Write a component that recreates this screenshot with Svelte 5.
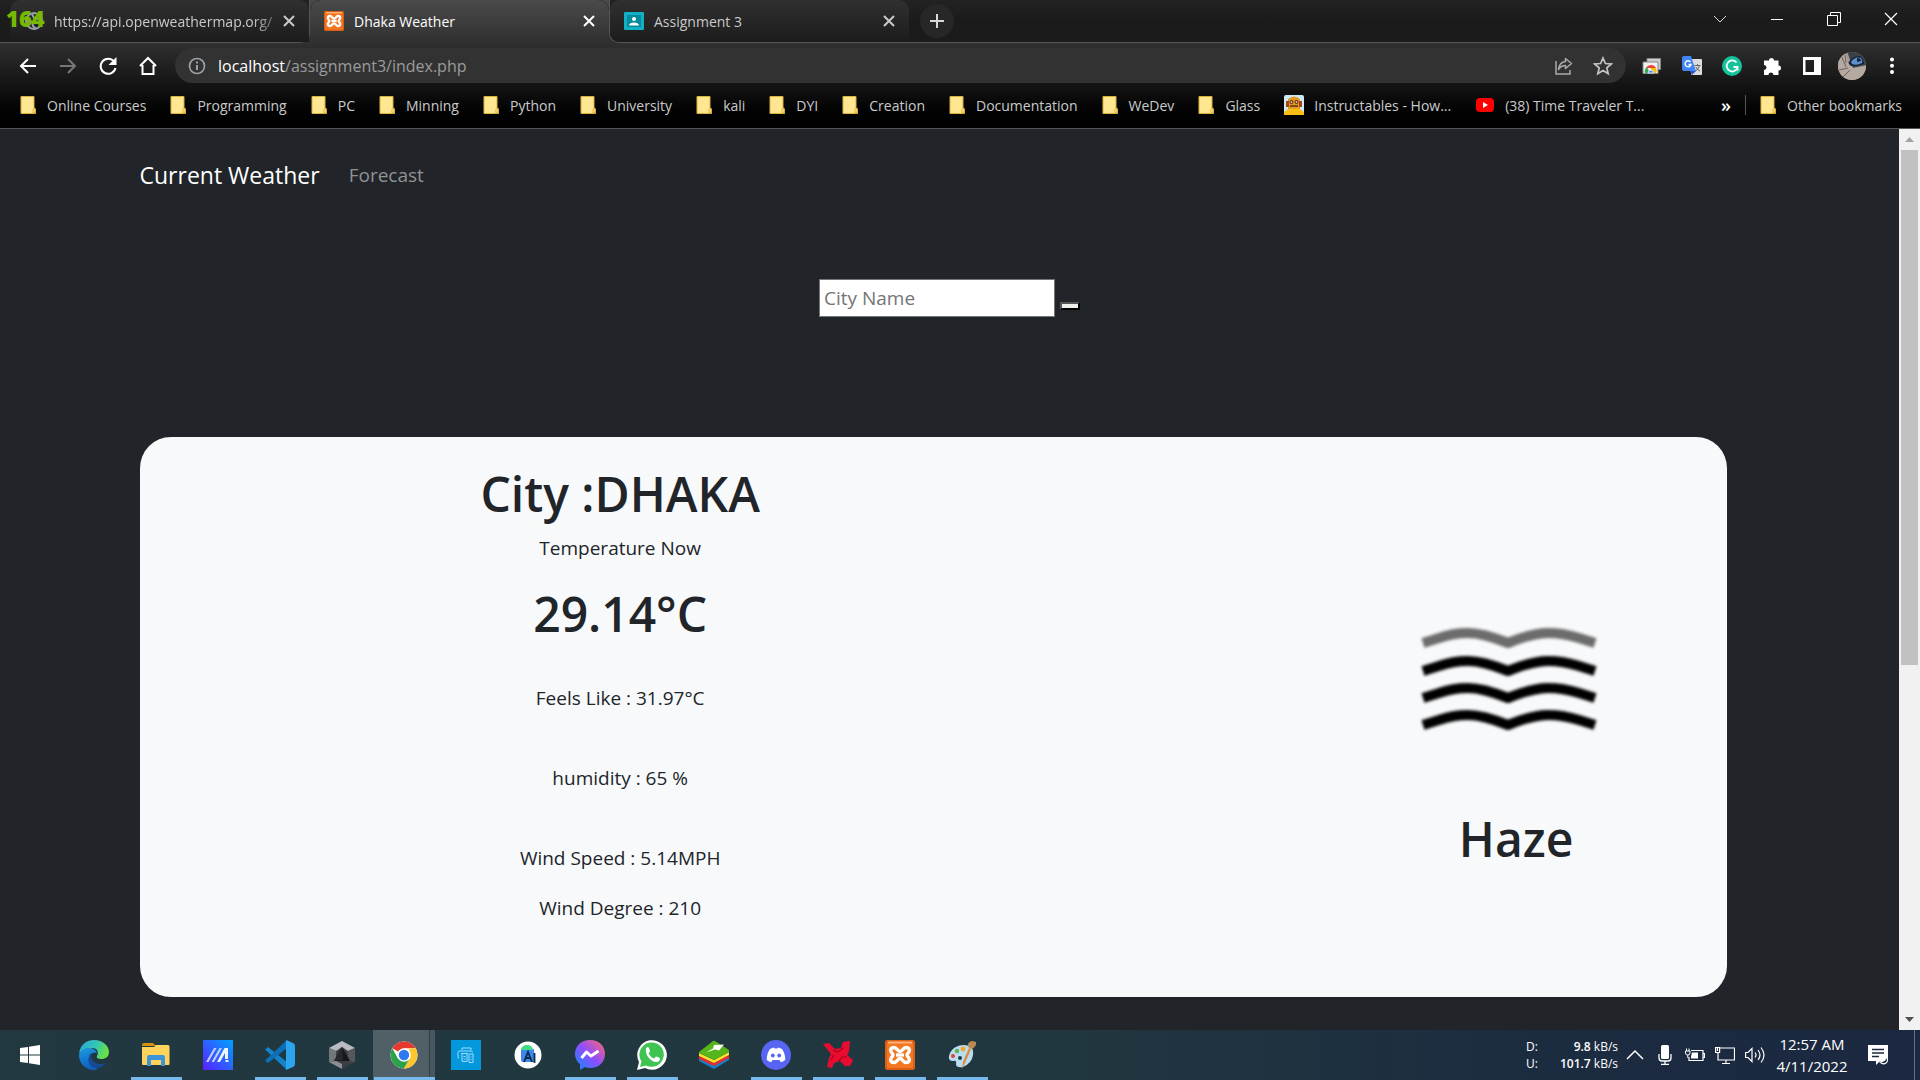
<script>
  const folders = ['Online Courses', 'Programming', 'PC', 'Minning', 'Python', 'University', 'kali', 'DYI', 'Creation', 'Documentation', 'WeDev', 'Glass'];
  const apps = [
    { id: 'edge', name: 'Microsoft Edge' },
    { id: 'explorer', name: 'File Explorer', open: true },
    { id: 'armoury', name: 'MyASUS' },
    { id: 'vscode', name: 'Visual Studio Code', open: true },
    { id: 'cube', name: 'Cube', open: true },
    { id: 'chrome', name: 'Google Chrome', open: true, active: true },
    { id: 'printer', name: 'Printer' },
    { id: 'studio', name: 'Android Studio' },
    { id: 'messenger', name: 'Messenger', open: true },
    { id: 'whatsapp', name: 'WhatsApp', open: true },
    { id: 'bluestacks', name: 'BlueStacks' },
    { id: 'discord', name: 'Discord', open: true },
    { id: 'red', name: 'Game', open: true },
    { id: 'xampp', name: 'XAMPP', open: true },
    { id: 'paint', name: 'Paint', open: true }
  ];
  const waves = [43, 71, 98, 125];
  let city = $state('');
</script>

{#snippet folder()}
  <svg class="folder" viewBox="0 0 16 18" aria-hidden="true">
    <path d="M1 .5h13V12l1.500 1v4.500H1z" fill="#ffe690" stroke="#d9b23c" />
    <path d="M13 17v-4l2-1v5z" fill="#fff0b0" stroke="#d9a520" stroke-width=".8" />
  </svg>
{/snippet}

{#snippet xampp()}
  <rect x="0" y="0" width="30" height="30" rx="3" fill="#f37623" />
  <rect x="1" y="1" width="28" height="28" rx="2" fill="none" stroke="#d35a10" stroke-width="1.500" />
  <path d="M3 2.500h24" stroke="#ffb27a" stroke-width="2" />
  <path d="M9 7.500c-3 0-4 2-3 4 .5 1.500 2 2 2 3.500s-1.500 2-2 3.500c-1 2 0 4 3 4s3.500-4 6-4 3 4 6 4 4-2 3-4c-.5-1.500-2-2-2-3.500s1.500-2 2-3.500c1-2 0-4-3-4s-3.500 4-6 4-3-4-6-4z" fill="none" stroke="#fff" stroke-width="3.400" />
  <path d="M11 15h8" stroke="#fff" stroke-width="3.400" />
{/snippet}

{#snippet cross()}
  <svg width="12" height="12" viewBox="0 0 12 12" aria-hidden="true"><path d="M1 1l10 10M11 1L1 11" stroke="currentColor" stroke-width="2" /></svg>
{/snippet}

<div class="desktop">
  <header class="browser">
    <div class="strip">
      <div class="side left">
        <div class="tab">
          <svg class="fav" viewBox="0 0 20 20" aria-hidden="true"><circle cx="10" cy="10" r="8" fill="none" stroke="#9aa0a6" stroke-width="2" /><path d="M3 9l5 2 1 4 3 3M8 3l2 4 4 1 3-2" fill="none" stroke="#9aa0a6" stroke-width="2" /></svg>
          <span class="title fade">https://api.openweathermap.org/</span>
          <button aria-label="Close tab">{@render cross()}</button>
        </div>
        <span class="fps">164</span>
      </div>
      <div class="tab active">
        <svg class="fav" viewBox="0 0 30 30" aria-hidden="true">{@render xampp()}</svg>
        <span class="title">Dhaka Weather</span>
        <button aria-label="Close tab">{@render cross()}</button>
      </div>
      <div class="side right">
        <div class="tab">
          <svg class="fav" viewBox="0 0 20 18" aria-hidden="true"><rect width="20" height="18" rx="1" fill="#12b0c4" /><rect x="3" y="3" width="14" height="12" fill="#078a9c" /><circle cx="10" cy="7" r="2" fill="#fff" /><path d="M5 13.500c0-4 10-4 10 0z" fill="#fff" /></svg>
          <span class="title">Assignment 3</span>
          <button aria-label="Close tab">{@render cross()}</button>
        </div>
        <button class="newtab" aria-label="New tab"><svg width="16" height="16" viewBox="0 0 16 16"><path d="M8 1v14M1 8h14" stroke="#d8d8d8" stroke-width="2" /></svg></button>
        <div class="controls">
          <button aria-label="Search tabs"><svg width="14" height="8" viewBox="0 0 14 8"><path d="M1 1l6 6 6-6" fill="none" stroke="#ddd" /></svg></button>
          <button aria-label="Minimize"><svg width="12" height="12" viewBox="0 0 12 12"><path d="M0 6.500h12" stroke="#fff" /></svg></button>
          <button aria-label="Restore"><svg width="14" height="14" viewBox="0 0 14 14"><path d="M.5 3.500h10v10H.5zM3.500 3.500V.5h10v10h-3" fill="none" stroke="#fff" /></svg></button>
          <button aria-label="Close"><svg width="14" height="14" viewBox="0 0 14 14"><path d="M1 1l12 12M13 1L1 13" stroke="#fff" stroke-width="1.200" /></svg></button>
        </div>
      </div>
    </div>

    <div class="toolbar">
      <button aria-label="Back"><svg viewBox="0 0 20 20"><path d="M18 10H3M10 3l-7 7 7 7" fill="none" stroke="#fff" stroke-width="2" /></svg></button>
      <button aria-label="Forward"><svg viewBox="0 0 20 20"><path d="M2 10h15M10 3l7 7-7 7" fill="none" stroke="#777" stroke-width="2" /></svg></button>
      <button aria-label="Reload"><svg viewBox="0 0 20 20"><path d="M16 5.500A7.500 7.500 0 1 0 17.500 12" fill="none" stroke="#fff" stroke-width="2" /><path d="M18.500 1v8h-8z" fill="#fff" /></svg></button>
      <button aria-label="Home"><svg viewBox="0 0 20 20"><path d="M2 10l8-8 8 8M4.500 9v9h11V9" fill="none" stroke="#fff" stroke-width="2" /></svg></button>
      <div class="omnibox">
        <svg width="18" height="18" viewBox="0 0 18 18" aria-hidden="true"><circle cx="9" cy="9" r="7.500" fill="none" stroke="#9aa0a6" stroke-width="1.700" /><path d="M9 8v5M9 4.500v2" stroke="#9aa0a6" stroke-width="2" /></svg>
        <span class="url"><b>localhost</b>/assignment3/index.php</span>
        <button aria-label="Share"><svg viewBox="0 0 20 20"><path d="M3 5v13h14v-4" fill="none" stroke="#aaa" stroke-width="1.500" /><path d="M12.500 2.500l6 5-6 5V9.500C9 9.500 7 11 5.500 13.500 6 9 8.500 6 12.500 5.500z" fill="none" stroke="#aaa" stroke-width="1.500" stroke-linejoin="round" /></svg></button>
        <button aria-label="Bookmark this page"><svg viewBox="0 0 20 20"><path d="M10 2l2.400 5.500 5.900.5-4.500 3.900 1.400 5.900-5.200-3.200-5.200 3.200 1.400-5.900L1.700 8l5.900-.5z" fill="none" stroke="#c4c4c4" stroke-width="1.700" /></svg></button>
      </div>
      <button aria-label="Screenshot extension"><svg viewBox="0 0 20 20"><path d="M5 2.500h13.500v11H5z" fill="#ccc" stroke="#888" /><path d="M1 6h15v11.500H1z" fill="#f1f1f1" stroke="#888" /><path d="M3 17a5.500 5.500 0 0 1 2-6l3 6z" fill="#34a853" /><path d="M4 12c2-4 8-4 10 0z" fill="#ea4335" /><path d="M9 12h5a6 6 0 0 1 0 5H9z" fill="#fbbc05" /><path d="M6 17a2.800 2.800 0 0 1 5.600 0z" fill="#4285f4" stroke="#fff" stroke-width=".8" /></svg></button>
      <button aria-label="Translate"><svg viewBox="0 0 20 20"><rect x="9" y="3" width="11" height="16" rx="1" fill="#ddd" /><path d="M0 2q0-2 2-2h7l5 15H2q-2 0-2-2z" fill="#4285f4" /><path d="M8 15h6l-4 4z" fill="#2a56c6" /><path d="M8.500 6A3 3 0 1 0 9 8.500H6.500" fill="none" stroke="#fff" stroke-width="1.400" /><path d="M12.500 9.500h6M15.500 8v1.500M17.500 9.500q-1 4-4 5.500M14 11q1 3 4 4" fill="none" stroke="#666" /></svg></button>
      <button aria-label="Grammarly"><svg viewBox="0 0 20 20"><circle cx="10" cy="10" r="10" fill="#15c39a" /><path d="M14.500 6.500a5.500 5.500 0 1 0 1 5M11.500 11h4v3.500" fill="none" stroke="#fff" stroke-width="1.800" /></svg></button>
      <button aria-label="Extensions"><svg viewBox="0 0 20 20"><path d="M2 4.500h5a2.500 2.500 0 1 1 5 0h4.500v5a2.500 2.500 0 1 1 0 5v4.500h-5a2.500 2.500 0 0 0-5 0H2v-5a2.500 2.500 0 0 0 0-5z" fill="#fff" /></svg></button>
      <button aria-label="Side panel"><svg viewBox="0 0 20 20"><path d="M1 1h18v18H1zM3.500 4v12H12V4z" fill="#fff" fill-rule="evenodd" /></svg></button>
      <button aria-label="Profile" class="avatar"><svg viewBox="0 0 28 28"><defs><clipPath id="face"><circle cx="14" cy="14" r="14" /></clipPath></defs><g clip-path="url(#face)"><path d="M0 0h28v28H0z" fill="#a3968c" /><path d="M9-1h19v14l-13 3z" fill="#3b4049" /><path d="M10 14Q11 4 22 4q4 3 4 8l-8 2z" fill="#16243b" /><path d="M13 10q4-6 10-4 2 3 1 5-6 3-10 1z" fill="#5f8fc9" /><path d="M19 6q4 0 4 3l-4 1z" fill="#15233a" /><path d="M0 5l8-3 2 9 5 5 13-2v14H0z" fill="#b5aaa1" /><path d="M3 3l5 12M1 18l9-2M5 25l7-7M7 3l1 8" stroke="#6d635c" /></g></svg></button>
      <button aria-label="Menu"><svg viewBox="0 0 20 20"><circle cx="10" cy="3.500" r="2" fill="#fff" /><circle cx="10" cy="9.700" r="2" fill="#fff" /><circle cx="10" cy="16" r="2" fill="#fff" /></svg></button>
    </div>

    <nav class="bookmarks" aria-label="Bookmarks">
      {#each folders as name}
        <button>{@render folder()}{name}</button>
      {/each}
      <button class="site"><svg width="20" height="20" viewBox="0 0 20 20"><rect width="20" height="20" rx="2" fill="#cfe8f5" /><path d="M4 4q6-5 12 0v10H4z" fill="#e39a25" /><path d="M2 6h3v6H2zM15 6h3v6h-3z" fill="#a8431d" /><path d="M0 20v-3q5-5 10-3 5-2 10 3v3z" fill="#f8bd12" /><path d="M6 11h8" stroke="#5a3210" stroke-width="1.500" /><circle cx="7.500" cy="7" r="2" fill="#713811" /><circle cx="12.500" cy="7" r="2" fill="#713811" /><circle cx="7.500" cy="7" r=".8" fill="#fff" /><circle cx="12.500" cy="7" r=".8" fill="#fff" /></svg>Instructables - How...</button>
      <button class="site"><svg width="20" height="20" viewBox="0 0 20 20"><rect x="1" y="3" width="18" height="14" rx="4" fill="#f00" /><path d="M8 7l5 3-5 3z" fill="#fff" /></svg>(38) Time Traveler T...</button>
      <button class="more" aria-label="More bookmarks">»</button>
      <button class="other">{@render folder()}Other bookmarks</button>
    </nav>
  </header>

  <div class="viewport">
    <main>
      <div class="container">
        <nav class="site-nav" aria-label="Site">
          <a class="brand" href="#current">Current Weather</a>
          <a class="link" href="#forecast">Forecast</a>
        </nav>
        <form onsubmit={(e) => e.preventDefault()}>
          <input type="text" placeholder="City Name" aria-label="City Name" bind:value={city} />
          <button type="submit" aria-label="Search"></button>
        </form>
        <section class="card">
          <div class="reading">
            <h1>City :DHAKA</h1>
            <p class="caption">Temperature Now</p>
            <h1 class="temp">29.14°C</h1>
            <p>Feels Like : 31.97°C</p>
            <p>humidity : 65 %</p>
            <p>Wind Speed : 5.14MPH</p>
            <p class="degree">Wind Degree : 210</p>
          </div>
          <div class="sky">
            <div class="picture">
              <svg width="260" height="150" viewBox="0 0 260 150" role="img" aria-label="Haze">
                <defs><filter id="soft" x="-10%" y="-10%" width="120%" height="120%"><feGaussianBlur stdDeviation="1.800" /></filter></defs>
                <g filter="url(#soft)" fill="none" stroke-width="10" stroke-linejoin="round">
                  {#each waves as y, i}
                    <path d="M44 {y}L60 {y - 5}Q74 {y - 10} 89 {y - 10}T129 {y}Q154 {y - 10} 169 {y - 10}T200 {y - 5}L216 {y}" stroke={i === 0 ? '#6c6c6c' : '#000'} />
                  {/each}
                </g>
              </svg>
            </div>
            <h1>Haze</h1>
          </div>
        </section>
      </div>
    </main>
    <div class="scroll" aria-hidden="true">
      <svg width="21" height="21" viewBox="0 0 21 21"><path d="M6 13l4.500-5 4.500 5z" fill="#a3a3a3" /></svg>
      <div class="track"><div class="thumb"></div></div>
      <svg width="21" height="21" viewBox="0 0 21 21"><path d="M6 8l4.500 5L15 8z" fill="#505050" /></svg>
    </div>
  </div>

  <footer class="taskbar">
    <button class="start" aria-label="Start"><svg width="20" height="20" viewBox="0 0 20 20"><path d="M0 3l8-1v7.500H0zM9 1.800L20 0v9.500H9zM0 10.500h8V18l-8-1zM9 10.500h11V20L9 18.200z" fill="#fff" /></svg></button>
    {#each apps as app}
      <button class="app" class:open={app.open} class:active={app.active} aria-label={app.name}>
        <svg width="30" height="30" viewBox="0 0 30 30">
          {#if app.id === 'edge'}
            <defs><linearGradient id="eg" x1="0" x2="1" y2=".3"><stop offset="0" stop-color="#2aa6dd" /><stop offset=".6" stop-color="#34c6b5" /><stop offset="1" stop-color="#68e04a" /></linearGradient><linearGradient id="eb" y2="1" x2=".3"><stop offset="0" stop-color="#1b9de2" /><stop offset="1" stop-color="#0f5fc0" /></linearGradient></defs>
            <path d="M0 14C1 5 7 0 15 0c9 0 15 6 15 12 0 5-4 7-7 7-4 0-6-1-5-3 2-3 1-8-5-8C7 8 2 10 0 14z" fill="url(#eg)" />
            <path d="M0 15c1-4 5-7 10-7 4 0 7 2 8 5-3-1-7 0-8 4-1 6 4 10 9 12-1 .7-3 1-4 1C6 30 0 23 0 15z" fill="url(#eb)" />
            <path d="M12.500 13C9 16 8 22 12 26c3 3 9 4 15-3-5 2-12 1-14-4-1-2-.8-4-.5-6z" fill="#144b94" />
          {:else if app.id === 'explorer'}
            <path d="M1 5q0-2 2-2h9l3 3H1z" fill="#d98f0b" /><path d="M1 7h12l2-2h12q1.500 0 1.500 2v17q0 1-1 1H2q-1 0-1-1z" fill="#ffd35c" /><path d="M6 26V17q0-2 2-2h14q2 0 2 2v9h-4v-6H10v6z" fill="#3b94d9" />
          {:else if app.id === 'armoury'}
            <defs><linearGradient id="ma" x1="1" x2="0" y2="1"><stop offset="0" stop-color="#00a2ff" /><stop offset="1" stop-color="#5a20ff" /></linearGradient></defs>
            <path d="M0 0h30v30H0z" fill="url(#ma)" /><path d="M3 22L11 8h2.500l-8 14zM8.500 22l8-14H19l-8 14z" fill="#b9d0ff" /><path d="M14 22l7.500-14H25v11h-3v-6l-5 9zM22.500 20h3v2h-3z" fill="#eef4ff" />
          {:else if app.id === 'vscode'}
            <path d="M0 9.500L3 7l19 15v8z" fill="#1583ca" /><path d="M0 20.500L3 23 22 8V0z" fill="#0b70b8" /><path d="M21 0l7 3q2 1 2 3v18q0 2-2 3l-7 3z" fill="#2aa5ee" />
          {:else if app.id === 'cube'}
            <path d="M15 1l13 7v14l-13 7-13-7V8z" fill="#3b3f43" /><path d="M15 1l13 7-7 3-6-4-6 4-7-3z" fill="#b8bcc0" /><path d="M2 8l7 3v10l-7 1z" fill="#73777b" /><path d="M28 8l-7 3v10l7 1z" fill="#54585c" /><path d="M2 22l7-1 6 3v5z" fill="#8b8e92" /><path d="M15 7l8 14H7z" fill="#15171a" /><path d="M15 7l1 13-9 1z" fill="#25282c" />
          {:else if app.id === 'chrome'}
            <circle cx="15" cy="15" r="13.500" fill="#fff" /><path d="M15 15L3.300 8.300A13.500 13.500 0 0 1 26.700 8.300H15z" fill="#e53b2e" /><path d="M3.300 8.300A13.500 13.500 0 0 0 15 28.500l5.800-10L9 18.500z" fill="#2aa24c" /><path d="M26.700 8.300A13.500 13.500 0 0 1 15 28.500l6-10.500-1-9.700z" fill="#fdc62d" /><circle cx="15" cy="15" r="6.800" fill="#fff" /><circle cx="15" cy="15" r="5.200" fill="#2d79ed" />
          {:else if app.id === 'printer'}
            <path d="M0 0h30v30H0z" fill="#0397dc" /><g fill="none" stroke="#9edcff" stroke-width="1"><path d="M11 10V8h9v2M8 18.500q-1 0-1-2v-4q0-1.500 2-1.500h11q1.500 0 1.500 1.500M10 13.500h7M11 13.500v8h5v-8M12.500 16.500h2M12.500 19h2M18 14h4v8.500h-4zM19.500 17h1M19.500 19.500h1" /></g>
          {:else if app.id === 'studio'}
            <circle cx="15" cy="15" r="13.500" fill="#fff" /><path d="M8 9h13v13H10q-2 0-2-2z" fill="#3f86ee" /><path d="M8 10a6 5 0 0 1 12 0z" fill="#3ddc84" /><path d="M11 22l4-10 4 10M12.500 18h5M21.500 13v10" fill="none" stroke="#0c2c48" stroke-width="1.800" />
          {:else if app.id === 'messenger'}
            <defs><linearGradient id="ms" x1="0" y1="1" x2="1" y2="0"><stop offset="0" stop-color="#0a8cff" /><stop offset=".5" stop-color="#8f4dff" /><stop offset="1" stop-color="#ff6a70" /></linearGradient></defs>
            <path d="M15 0C6 0 0 6 0 14c0 4 2 8 5 10v6l5-3q2 1 5 1c9 0 15-6 15-14S24 0 15 0z" fill="url(#ms)" /><path d="M6.500 18l5-6 4.500 4 7.500-5" fill="none" stroke="#fff" stroke-width="3" stroke-linejoin="round" />
          {:else if app.id === 'whatsapp'}
            <path d="M0 30l2-8A14.800 14.800 0 1 1 8 28z" fill="#fff" /><path d="M3 27l1.500-5.500A12.200 12.200 0 1 1 9 25.500z" fill="#3fc351" /><path d="M9 8q2-2 3 0l1 3q0 1-1.500 2.500 2 3.500 5.500 5l2-2q3 .5 4 2 0 3-3 3.500C14 22.500 7.500 15 9 8z" fill="#fff" />
          {:else if app.id === 'bluestacks'}
            <path d="M0 18l15 7 15-8v3l-15 9-15-8z" fill="#1581c8" /><path d="M0 16l15 7 15-8v3l-15 8-15-7z" fill="#e52b31" /><path d="M0 13l15 7 15-8v3l-15 8-15-7z" fill="#ffe12e" /><path d="M0 12L14 1q1-.5 2 0l14 9v2l-15 8-15-7z" fill="#55b51b" /><path d="M15 5l10-.5-5 6-4-1-9 3 7-4z" fill="#fff" />
          {:else if app.id === 'discord'}
            <circle cx="15" cy="15" r="15" fill="#5865f2" /><path d="M9 9q3-1.500 4-1.500l.7 1h2.600l.7-1q1 0 4 1.500 3.500 5 3.200 11-2 2-4.500 2l-1.200-2h-7L10.300 22q-2.500 0-4.500-2Q5.500 14 9 9z" fill="#fff" /><circle cx="11.800" cy="15.500" r="1.900" fill="#5865f2" /><circle cx="18.200" cy="15.500" r="1.900" fill="#5865f2" />
          {:else if app.id === 'red'}
            <path d="M0 4l6-1 6 6 6-1 2-6 7-1-1 11-2 3 6 5-3 6h-5l-5-5-6 2-2 5-5-1 2-9 2-4-4-5z" fill="#ea0c30" /><path d="M10 10l5 2 5-4M8 20l3-5M16 21l3-4 5 0" fill="none" stroke="#a90020" stroke-width="1.200" />
          {:else if app.id === 'xampp'}
            {@render xampp()}
          {:else}
            <path d="M2 16C4 7 14 3 22 6q5 2 4 9-1 8-10 12-7 1-7-3 1-4-3-3-5 0-4-5z" fill="#b9dcf0" /><circle cx="6" cy="16" r="2" fill="#e3432f" /><circle cx="10" cy="11" r="2.200" fill="#5cb548" /><circle cx="16" cy="9" r="2.400" fill="#f3a62a" /><circle cx="13" cy="18" r="2" fill="#22384a" /><path d="M24 9l-6 14-3 6 1-7 6-14z" fill="#df8b33" /><path d="M21 7q-1-5 4-6l4 1q1 4-4 7z" fill="#b98a55" />
          {/if}
        </svg>
      </button>
    {/each}
    <div class="tray">
      <dl class="net">
        <dt>D:</dt><dd><b>9.8</b> kB/s</dd>
        <dt>U:</dt><dd><b>101.7</b> kB/s</dd>
      </dl>
      <button aria-label="Show hidden icons"><svg width="18" height="20" viewBox="0 0 18 20"><path d="M1 14l8-8 8 8" fill="none" stroke="#fff" stroke-width="1.500" /></svg></button>
      <button aria-label="Microphone"><svg width="14" height="20" viewBox="0 0 14 20"><rect x="3" y="0" width="8" height="14" rx="1.500" fill="#fff" /><path d="M1 9v4q0 3 3 3h6q3 0 3-3V9M7 16v3M3 19.500h8" fill="none" stroke="#fff" stroke-width="1.300" /></svg></button>
      <button aria-label="Battery"><svg width="20" height="20" viewBox="0 0 20 20"><path d="M6 5.500h12v10H4V12M18 8.500h1.500v4H18" fill="none" stroke="#fff" stroke-width="1.200" /><path d="M7 7.500h6v6H6v-2z" fill="#fff" /><path d="M.5 6h4.500v2q0 2-2.200 2T.5 8zM1.500 3.500V6M4 3.500V6M2.800 10v3" fill="none" stroke="#fff" /></svg></button>
      <button aria-label="Network"><svg width="20" height="20" viewBox="0 0 20 20"><path d="M5 3h14.500v12H3V8M11 15v3M7 18.500h8M.6 2.500h4v5h-4zM2.500 3v3" fill="none" stroke="#fff" stroke-width="1.200" /></svg></button>
      <button aria-label="Volume"><svg width="20" height="20" viewBox="0 0 20 20"><path d="M.6 7.500H3l4-4v13l-4-4H.6z" fill="none" stroke="#fff" stroke-width="1.200" /><path d="M10 7.500q2 2.500 0 5M13 5q4 5 0 10M16 2.500q6 7.500 0 15" fill="none" stroke="#fff" stroke-width="1.200" /></svg></button>
      <div class="clock"><time>12:57 AM</time><time>4/11/2022</time></div>
      <button class="notes" aria-label="Notifications"><svg width="22" height="22" viewBox="0 0 22 22"><path d="M0 1h20v16h-8l-4 4v-4H0z" fill="#fff" /><path d="M4 5.500h12M4 9h12M4 12.500h7" stroke="#1b2941" stroke-width="1.500" /><path d="M18 11q1 6-6 7 3 3 6 1t0-8z" fill="#1b2941" stroke="#fff" stroke-width="1.200" /></svg></button>
      <span class="peek"></span>
    </div>
  </footer>
</div>

<style>
  :global(body) { margin: 0; background: #212529; }
  .desktop { min-height: 100vh; display: flex; flex-direction: column; font-family: 'Open Sans', 'Noto Sans', sans-serif; font-size: 14px; }
  button { border: 0; background: none; padding: 0; margin: 0; font: inherit; color: inherit; display: flex; align-items: center; justify-content: center; flex: none; }
  svg { display: block; flex: none; }

  .browser { background: linear-gradient(#4a4a4a, #303030 43px, #2b2b2b 50px, #030303 110px, #000); color: #c9cacc; border-bottom: 1px solid #555; }
  .strip { display: flex; height: 43px; }
  .side { display: flex; align-items: stretch; background: linear-gradient(#222, #1b1b1b 20px); border-bottom: 1px solid #555; }
  .side.left { position: relative; padding-left: 10px; border-right: 1px solid #555; border-bottom-right-radius: 10px; }
  .side.right { flex: 1; border-left: 1px solid #555; border-bottom-left-radius: 10px; overflow: hidden; }
  .tab { width: 299px; box-sizing: border-box; display: flex; align-items: center; padding: 0 14px; border-radius: 10px 10px 0 0; }
  .side .tab { background: linear-gradient(#303030, #1c1c1c); }
  .tab.active {
    color: #fff;
    padding-bottom: 1px;
    background:
      radial-gradient(circle at 100% 100%, transparent 9px, #222 10px) 0 0 / 10px 10px no-repeat,
      radial-gradient(circle at 0 100%, transparent 9px, #222 10px) 100% 0 / 10px 10px no-repeat;
  }
  .fav { width: 20px; height: 20px; margin-right: 10px; }
  .title { flex: 1; min-width: 0; white-space: nowrap; margin-right: 4px; }
  .fade { mask-image: linear-gradient(90deg, #000 88%, #0004); }
  .fps { position: absolute; left: 6px; top: 4px; color: #76b900; font-weight: 800; font-size: 22px; line-height: 28px; }
  .newtab { width: 34px; height: 34px; border-radius: 17px; background: #272727; align-self: center; margin-left: 11px; }
  .controls { margin-left: auto; display: flex; align-items: center; padding: 0 1px 5px 0; }
  .controls button { width: 57px; }

  .toolbar { display: flex; align-items: center; height: 45px; padding: 0 8px; }
  .toolbar button { width: 40px; height: 34px; }
  .toolbar svg { width: 20px; height: 20px; }
  .toolbar .avatar svg { width: 28px; height: 28px; }
  .omnibox { flex: 1; display: flex; align-items: center; height: 35px; border-radius: 18px; background: #323232; margin: 0 6px 0 7px; padding: 0 3px 0 13px; }
  .omnibox > svg { width: 18px; height: 18px; }
  .url { flex: 1; margin-left: 12px; font-size: 16px; color: #9a9b9d; }
  .url b { font-weight: 400; color: #fff; }

  .bookmarks { display: flex; align-items: center; height: 34px; padding: 0 18px 6px 20px; gap: 24px; white-space: nowrap; }
  .folder { width: 16px; height: 18px; margin-right: 11px; }
  .site { gap: 10px; }
  .more { margin-left: auto; color: #fff; font-size: 18px; font-weight: 600; line-height: 20px; }
  .other { border-left: 1px solid #555; padding-left: 14px; margin-left: -10px; height: 20px; }

  .viewport { flex: 1; display: flex; background: #212529; }
  main { flex: 1; min-width: 0; color: #212529; font-size: 19px; line-height: 30px; }
  .container { max-width: 1620px; margin: 0 auto; }
  .site-nav { display: flex; align-items: center; height: 92px; gap: 29px; }
  a { text-decoration: none; }
  .brand { color: #fff; font-size: 23px; }
  .link { color: #909294; }
  form { display: flex; justify-content: center; align-items: flex-end; gap: 5px; padding: 58px 0 120px; }
  input { width: 236px; height: 38px; box-sizing: border-box; border: 1px solid #767676; border-radius: 0; padding: 1px 4px; font: inherit; background: #fff; }
  input::placeholder { color: #757575; opacity: 1; }
  form button { width: 20px; height: 8px; margin-bottom: 7px; box-sizing: border-box; background: #efefef; border: 2px outset #555; }
  .card { display: grid; grid-template-columns: 962fr 421fr; column-gap: 205px; margin: 0 33px 33px 0; background: #f8f9fb; border-radius: 31px; text-align: center; }
  .reading { padding: 27px 0 74px; }
  h1 { margin: 0; font-size: 48px; line-height: 60px; font-weight: 600; }
  p { margin: 0 0 50px; }
  .caption { margin: 9px 0 21px; }
  .temp { margin-bottom: 39px; }
  p:nth-last-child(2) { margin-bottom: 20px; }
  .degree { margin: 0; }
  .sky { padding-top: 163px; }
  .picture { display: flex; justify-content: center; padding: 0 14px 59px 0; }

  .scroll { width: 21px; display: flex; flex-direction: column; background: #f1f1f1; }
  .track { flex: 1; padding: 0 2px; }
  .thumb { height: 60%; background: #c1c1c1; }

  .taskbar { display: flex; height: 50px; background: linear-gradient(90deg, #213840, #21373f 55%, #1c2c40 80%, #1b2841); color: #fff; }
  .start { width: 63px; padding-right: 3px; box-sizing: border-box; }
  .app { width: 62px; padding: 0 5px; box-sizing: border-box; }
  .app.open { background: linear-gradient(#76b9ed, #76b9ed) 50% 100% / 51px 3px no-repeat; }
  .app.active { background: linear-gradient(#76b9ed, #76b9ed) 50% 100% / 61px 3px no-repeat, linear-gradient(90deg, #516067 56px, #2d4048 56px, #2d4048 57px, #49585f 57px); }
  .tray { margin-left: auto; display: flex; align-items: center; }
  .net { display: grid; grid-template-columns: 24px 68px; font-size: 12px; line-height: 17px; margin: 0 2px 0 0; }
  dd { margin: 0; text-align: right; }
  b { font-weight: 600; }
  .tray button { width: 30px; }
  .clock { display: flex; flex-direction: column; width: 84px; text-align: center; font-size: 15px; line-height: 22px; }
  .tray .notes { width: 50px; }
  .peek { width: 5px; align-self: stretch; border-left: 1px solid #68707f; margin-left: 10px; }
</style>
